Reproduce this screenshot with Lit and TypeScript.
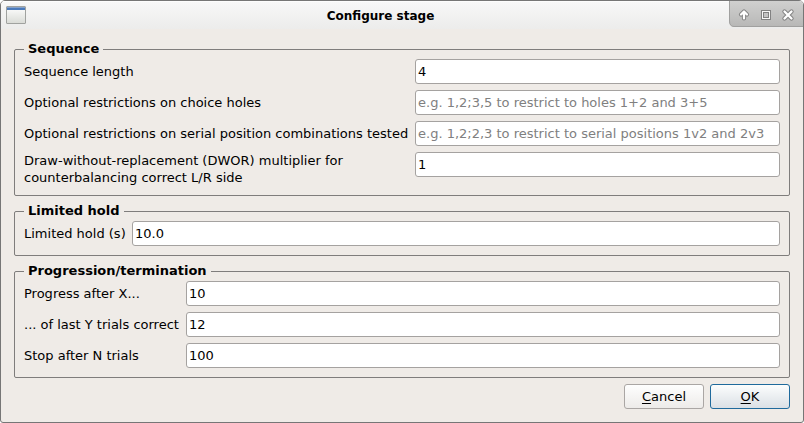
import { LitElement, html, css, nothing } from "lit";
import { customElement, property } from "lit/decorators.js";

interface Field {
  label: string;
  value?: string;
  hint?: string;
}

@customElement("field-group")
class FieldGroup extends LitElement {
  @property() heading = "";
  @property({ attribute: false }) fields: Field[] = [];
  @property({ type: Number }) labelWidth = 100;

  static styles = css`
    :host {
      display: block;
    }
    .box {
      position: relative;
      box-sizing: border-box;
      border: 1px solid #7f7d7c;
      border-radius: 2px;
      padding: 9px;
      display: flex;
      flex-direction: column;
      gap: 6px;
    }
    .heading {
      position: absolute;
      left: 9px;
      top: -10px;
      height: 17px;
      line-height: 17px;
      padding: 0 4px;
      background: #efebe7;
      font-weight: bold;
      white-space: nowrap;
    }
    .row {
      display: flex;
      align-items: flex-start;
    }
    .label {
      flex: none;
      min-height: 25px;
      display: flex;
      align-items: center;
      line-height: 17px;
      white-space: pre;
    }
    .field {
      flex: 1;
      min-width: 0;
      box-sizing: border-box;
      height: 25px;
      border: 1px solid #a5a2a0;
      border-radius: 3px;
      background: #fff;
      padding: 0 2px;
      font: inherit;
      color: #000;
      outline: none;
    }
    .field::placeholder {
      color: #808080;
      opacity: 1;
    }
  `;

  render() {
    return html`<div class="box">
      <span class="heading">${this.heading}</span>
      ${this.fields.map(
        (f) => html`<div class="row">
          <label class="label" style="width:${this.labelWidth}px">${f.label}</label>
          <input class="field" .value=${f.value ?? ""} placeholder=${f.hint ?? nothing} />
        </div>`
      )}
    </div>`;
  }
}

@customElement("app-root")
class AppRoot extends LitElement {
  static styles = css`
    :host {
      display: block;
      width: 804px;
      height: 423px;
      background: #fff;
      font: 13px "DejaVu Sans", sans-serif;
      color: #000;
    }
    .window {
      box-sizing: border-box;
      height: 423px;
      border: 1px solid #767676;
      border-radius: 5px 5px 3px 3px;
      background: #efebe7;
      overflow: hidden;
      display: flex;
      flex-direction: column;
    }
    .titlebar {
      flex: none;
      height: 28px;
      display: flex;
      align-items: flex-start;
      background: linear-gradient(#f8f8f8, #ececeb);
      box-shadow: inset 0 1px 0 #fdfdfd;
    }
    .appicon {
      flex: none;
      margin: 5px 0 0 5px;
    }
    .title {
      flex: 1;
      text-align: center;
      font-size: 12px;
      font-weight: bold;
      line-height: 31px;
      height: 28px;
      padding-left: 6px;
    }
    .controls {
      flex: none;
      width: 74px;
      height: 26px;
    }
    .content {
      padding: 20px 13px 0;
      display: flex;
      flex-direction: column;
      gap: 15px;
    }
    .buttons {
      display: flex;
      justify-content: flex-end;
      gap: 6px;
      margin-top: -9px;
    }
    .button {
      box-sizing: border-box;
      width: 80px;
      height: 25px;
      padding: 0;
      border: 1px solid #aaa6a4;
      border-radius: 3px;
      background: linear-gradient(#fefefe, #edebe9);
      font: inherit;
      line-height: 23px;
      color: #000;
      text-align: center;
    }
    .primary {
      border-color: #1f6a9c;
      background: linear-gradient(#fcfdfd, #dae0e5);
    }
    .key {
      text-decoration: underline;
      text-decoration-thickness: 1px;
      text-underline-offset: 2px;
      text-decoration-skip-ink: none;
    }
  `;

  private sequence: Field[] = [
    { label: "Sequence length", value: "4" },
    {
      label: "Optional restrictions on choice holes",
      hint: "e.g. 1,2;3,5 to restrict to holes 1+2 and 3+5",
    },
    {
      label: "Optional restrictions on serial position combinations tested",
      hint: "e.g. 1,2;2,3 to restrict to serial positions 1v2 and 2v3",
    },
    {
      label:
        "Draw-without-replacement (DWOR) multiplier for\ncounterbalancing correct L/R side",
      value: "1",
    },
  ];

  private hold: Field[] = [{ label: "Limited hold (s)", value: "10.0" }];

  private progression: Field[] = [
    { label: "Progress after X...", value: "10" },
    { label: "... of last Y trials correct", value: "12" },
    { label: "Stop after N trials", value: "100" },
  ];

  render() {
    return html`<div class="window">
      <div class="titlebar">
        <svg class="appicon" width="20" height="18" viewBox="0 0 20 18">
          <defs>
            <linearGradient id="pane" x2="0" y2="1">
              <stop offset="0" stop-color="#ffffff" />
              <stop offset="1" stop-color="#d9dbd6" />
            </linearGradient>
          </defs>
          <rect x=".5" y=".5" width="19" height="17" rx=".5" fill="url(#pane)" stroke="#a0a29f" />
          <rect x="1" y="1" width="18" height="1" fill="#87a3cb" />
          <rect x="1" y="2" width="18" height="2" fill="#4a7abc" />
        </svg>
        <div class="title">Configure stage</div>
        <svg class="controls" viewBox="0 0 74 26">
          <defs>
            <linearGradient id="tab" x2="0" y2="1">
              <stop offset="0" stop-color="#d0d0cf" />
              <stop offset="1" stop-color="#b7b7b6" />
            </linearGradient>
          </defs>
          <path d="M0 0H74V26H5Q0 25 0 20Z" fill="url(#tab)" />
          <path d="M.5 0V20Q.5 25.500 5 25.500H74" fill="none" stroke="#a0a09f" />
          <path
            d="M15 11V17.500M12 13.500L15 10.500L18 13.500"
            fill="none" stroke="#858585" stroke-width="4.200" stroke-linejoin="round" stroke-linecap="round"
          />
          <path
            d="M15 11V17.500M12 13.500L15 10.500L18 13.500"
            fill="none" stroke="#fff" stroke-width="2.200" stroke-linejoin="round" stroke-linecap="round"
          />
          <rect x="32.500" y="9.500" width="9" height="9" fill="#f8f8f8" stroke="#828282" />
          <rect x="34.500" y="11.500" width="5" height="5" fill="#c4c4c4" stroke="#828282" />
          <path
            d="M55.500 10.500L62.500 17.500M62.500 10.500L55.500 17.500"
            stroke="#858585" stroke-width="4.400" stroke-linecap="round"
          />
          <path
            d="M55.500 10.500L62.500 17.500M62.500 10.500L55.500 17.500"
            stroke="#fff" stroke-width="2.300" stroke-linecap="round"
          />
        </svg>
      </div>
      <div class="content">
        <field-group heading="Sequence" .labelWidth=${391} .fields=${this.sequence}></field-group>
        <field-group heading="Limited hold" .labelWidth=${108} .fields=${this.hold}></field-group>
        <field-group
          heading="Progression/termination"
          .labelWidth=${162}
          .fields=${this.progression}
        ></field-group>
        <div class="buttons">
          <button class="button"><span class="key">C</span>ancel</button>
          <button class="button primary"><span class="key">O</span>K</button>
        </div>
      </div>
    </div>`;
  }
}
